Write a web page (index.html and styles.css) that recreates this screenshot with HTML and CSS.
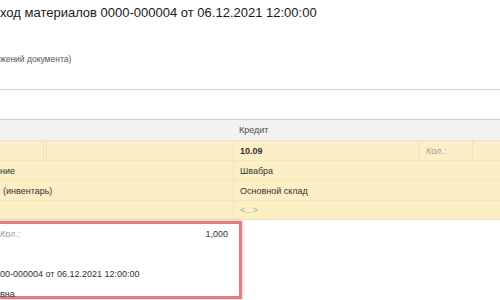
FILE: index.html
```html
<!DOCTYPE html>
<html lang="ru">
  <head>
    <meta charset="UTF-8" />
    <meta name="viewport" content="width=device-width, initial-scale=1.0" />
    <title>Расход материалов</title>
    <link rel="stylesheet" href="styles.css">
  </head>

  <body>
    <div id="page">
      <h1 class="doc-title">ход материалов 0000-000004 от 06.12.2021 12:00:00</h1>
      <div class="doc-subtitle">жений документа)</div>
      <div class="separator"></div>

      <div class="entries">
        <div class="entries-head">
          <div class="side-left"></div>
          <div class="side-right">Кредит</div>
        </div>

        <div class="entry-row">
          <div class="side-left split">
            <div class="cell cell-narrow"></div>
            <div class="cell cell-wide"></div>
          </div>
          <div class="side-right split">
            <div class="cell cell-account">10.09</div>
            <div class="cell cell-qty label">Кол.:</div>
            <div class="cell cell-rest"></div>
          </div>
        </div>

        <div class="entry-row">
          <div class="side-left">ние</div>
          <div class="side-right">Швабра</div>
        </div>

        <div class="entry-row">
          <div class="side-left indent">(инвентарь)</div>
          <div class="side-right">Основной склад</div>
        </div>

        <div class="entry-row last">
          <div class="side-left"></div>
          <div class="side-right empty-value">&lt;...&gt;</div>
        </div>
      </div>

      <!-- popup with the selected line details -->
      <div class="details">
        <div class="details-row">
          <span class="label">Кол.:</span>
          <span class="amount">1,000</span>
        </div>
        <div class="details-row"></div>
        <div class="details-row">00-000004 от 06.12.2021 12:00:00</div>
        <div class="details-row">вна</div>
      </div>
    </div>
  </body>
</html>
```

FILE: styles.css
```css
* {
  box-sizing: border-box;
}

body {
  font-family: "Liberation Sans", Arial, sans-serif;
  background-color: #ffffff;
  color: #333333;
  margin: 0;
  padding: 0;
  overflow: hidden;
}

#page {
  width: 500px;
  height: 300px;
  overflow: hidden;
}

.doc-title {
  margin: 0;
  padding-top: 5px;
  font-size: 13px;
  line-height: 16px;
  font-weight: normal;
  color: #1a1a1a;
}

.doc-subtitle {
  margin-top: 32px;
  font-size: 8.5px;
  line-height: 12px;
  color: #555555;
}

.separator {
  margin-top: 24px;
  height: 1px;
  background-color: #d0d0d0;
}

.entries {
  margin-top: 29px;
  border-top: 1px solid #cfcfcf;
  font-size: 9px;
}

.entries-head {
  display: flex;
  height: 21px;
  background-color: #f2f2f2;
  border-bottom: 1px solid #e4e4e4;
  color: #4d4d4d;
}

.entries-head .side-right {
  border-left: none;
}

.entry-row {
  display: flex;
  height: 20px;
  background-color: #fcefc6;
  border-bottom: 1px solid #f6e6b8;
  color: #333333;
}

.entry-row.last {
  height: 19px;
  border-bottom-color: #efe3c0;
}

.side-left {
  width: 233px;
  flex-shrink: 0;
  display: flex;
  align-items: center;
}

.side-right {
  flex: 1;
  display: flex;
  align-items: center;
  padding-left: 6px;
  border-left: 1px solid #f3e3b6;
}

.indent {
  padding-left: 3px;
}

.split {
  padding-left: 0;
  align-items: stretch;
}

.cell {
  display: flex;
  align-items: center;
}

.cell-narrow {
  width: 44px;
  border-right: 1px solid #f1e1b3;
}

.cell-wide {
  flex: 1;
  margin-left: 2px;
  border-left: 1px solid #f1e1b3;
}

.cell-account {
  width: 185px;
  padding-left: 6px;
  font-weight: bold;
  border-right: 1px solid #f1e1b3;
}

.cell-qty {
  width: 54px;
  padding-left: 7px;
  border-right: 1px solid #f1e1b3;
}

.cell-rest {
  flex: 1;
}

.label {
  font-style: italic;
  color: #9a9a9a;
}

.empty-value {
  color: #a8a8a8;
}

.details {
  margin-top: 1px;
  margin-left: -10px;
  width: 252px;
  height: 78px;
  border: 3px solid #e67d7d;
  box-shadow: 0 0 3px rgba(120, 40, 40, 0.35);
  background-color: #ffffff;
  font-size: 9px;
}

.details-row {
  display: flex;
  align-items: center;
  justify-content: space-between;
  height: 20px;
  padding-left: 7px;
  padding-right: 11px;
  color: #333333;
}

.amount {
  color: #333333;
}
```
